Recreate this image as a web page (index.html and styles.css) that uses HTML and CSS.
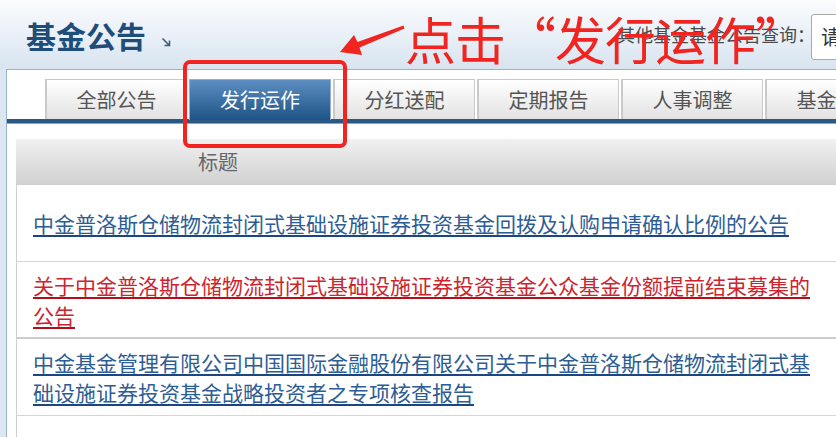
FILE: index.html
```html
<!DOCTYPE html>
<html lang="zh-CN">
<head>
  <meta charset="utf-8">
  <title>基金公告</title>
  <link rel="stylesheet" href="styles.css">
</head>
<body>

  <div class="page">
    <div class="top">
      <div class="title">基金公告</div>
      <svg class="more" width="10" height="10" viewBox="0 0 10 10">
        <path d="M1.5 1.5 L8 8 M3.5 8.5 H8.5 V3.5" fill="none" stroke="#3d5a78" stroke-width="1.5"/>
      </svg>
      <div class="search">
        <span class="search-label">其他基金基金公告查询：</span>
        <div class="search-box">请</div>
      </div>
    </div>

    <div class="panel">
      <div class="tabs">
        <div class="tab">全部公告</div>
        <div class="tab active">发行运作</div>
        <div class="tab">分红送配</div>
        <div class="tab">定期报告</div>
        <div class="tab">人事调整</div>
        <div class="tab">基金公告</div>
      </div>
      <div class="tabs-line"></div>

      <div class="list">
        <div class="list-head">标题</div>
        <div class="row"><a class="link">中金普洛斯仓储物流封闭式基础设施证券投资基金回拨及认购申请确认比例的公告</a></div>
        <div class="row thick"><a class="link hot">关于中金普洛斯仓储物流封闭式基础设施证券投资基金公众基金份额提前结束募集的公告</a></div>
        <div class="row"><a class="link">中金基金管理有限公司中国国际金融股份有限公司关于中金普洛斯仓储物流封闭式基础设施证券投资基金战略投资者之专项核查报告</a></div>
        <div class="row"></div>
      </div>
    </div>

    <!-- annotation drawn over the screenshot -->
    <svg class="mark" width="836" height="160" viewBox="0 0 836 160">
      <rect x="185" y="62" width="160" height="84" rx="5" fill="none" stroke="#f2241f" stroke-width="4"/>
      <polygon points="340,52 354,35 357.5,42 403.5,25.5 404.5,28.5 359.5,47.5 362,55" fill="#f2241f"/>
    </svg>
    <div class="note">点击“发行运作”</div>
  </div>

</body>
</html>
```

FILE: styles.css
```css
html, body {
    margin: 0;
    padding: 0;
}

body {
    width: 836px;
    height: 437px;
    overflow: hidden;
    background: #dce6f0;
    font-family: "Noto Sans CJK SC", "Noto Sans", sans-serif;
}

.page {
    position: relative;
    width: 1000px;
}

.top {
    height: 69px;
    display: flex;
    align-items: center;
    padding-left: 26px;
    background: linear-gradient(#fbfcfe, #d8e4f0);
}

.title {
    font-size: 30px;
    font-weight: 700;
    color: #1f4d7a;
    line-height: 36px;
}

.more {
    margin-left: 15px;
    margin-top: 14px;
}

.search {
    display: flex;
    align-items: center;
    margin-left: 446px;
}

.search-label {
    font-size: 18px;
    color: #4a4a4a;
    margin-top: -1px;
}

.search-box {
    margin-left: -4px;
    width: 150px;
    height: 46px;
    box-sizing: border-box;
    border: 1px solid #a9a9a9;
    border-radius: 3px;
    background: #fff;
    font-size: 20px;
    color: #333;
    line-height: 44px;
    padding-left: 9px;
    margin-top: 5px;
}

.panel {
    margin-left: 6px;
    height: 400px;
    background: #fff;
    border-top: 1px solid #97b3cd;
    border-left: 1px solid #97b3cd;
    padding-top: 9px;
}

.tabs {
    display: flex;
    gap: 2px;
    padding-left: 38px;
    height: 40px;
    align-items: flex-end;
}

.tab {
    width: 142px;
    height: 40px;
    box-sizing: border-box;
    border: 1px solid #c9c9c9;
    border-bottom: none;
    border-left-width: 2px;
    background: linear-gradient(#ffffff, #e2e2e2);
    font-size: 20px;
    color: #555;
    text-align: center;
    line-height: 40px;
    flex: none;
}

.tab.active {
    height: 41px;
    margin-bottom: -1px;
    border: 1px solid #8fb1d4;
    border-bottom: none;
    background: linear-gradient(#5d8ec2, #1e5385);
    color: #fff;
}

.tabs-line {
    height: 4px;
    background: #2c5885;
    border-bottom: 1px solid #8aa6c2;
}

.list {
    margin: 15px 0 0 9px;
}

.list-head {
    height: 46px;
    line-height: 46px;
    padding-left: 182px;
    font-size: 20px;
    color: #666;
    background: linear-gradient(#f1f1f1, #d0d0d0);
}

.row {
    height: 76px;
    display: flex;
    align-items: center;
    padding-left: 16px;
    border-left: 1px solid #cfcfcf;
    border-bottom: 1px solid #d4d4d4;
}

.row.thick {
    border-bottom: 2px solid #cdcdcd;
    height: 75px;
}

.link {
    width: 790px;
    font-size: 21px;
    line-height: 30px;
    color: #2d5d94;
    text-decoration: underline;
    text-decoration-color: #1b4682;
    text-decoration-thickness: 2px;
    text-underline-offset: 3px;
}

.link.hot {
    color: #cc2530;
    text-decoration-color: #b0101c;
}

.mark {
    position: absolute;
    left: 0;
    top: 0;
}

.note {
    position: absolute;
    left: 405px;
    top: 13px;
    font-size: 51px;
    line-height: 51px;
    letter-spacing: -1px;
    color: #f2241f;
    white-space: nowrap;
}
```
